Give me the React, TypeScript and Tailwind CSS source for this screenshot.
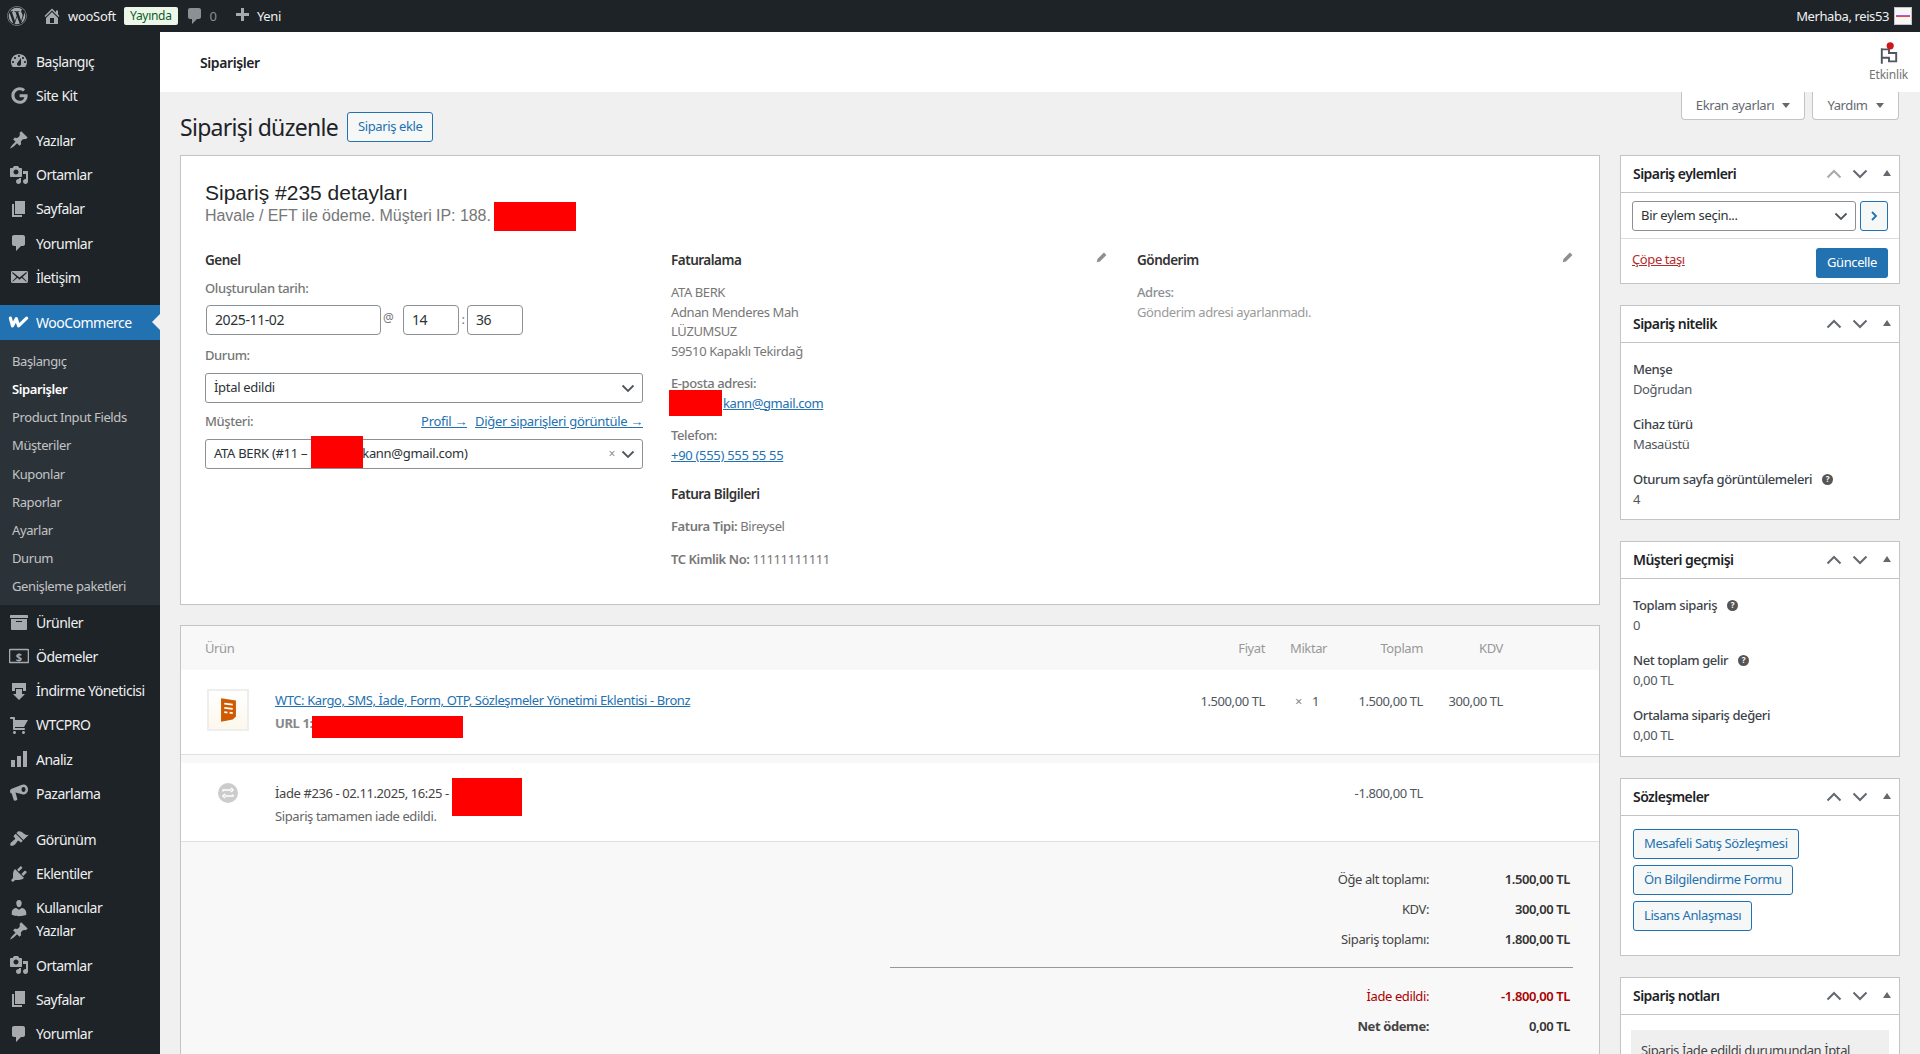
import type { ReactNode } from "react";
import { FaWordpress, FaGoogle } from "react-icons/fa";

const PATHS: Record<string, string> = {
  dashboard: "M3.76 16h12.48c1.1-1.37 1.76-3.11 1.76-5 0-4.42-3.58-8-8-8s-8 3.58-8 8c0 1.89.66 3.63 1.76 5zM10 4c.55 0 1 .45 1 1s-.45 1-1 1-1-.45-1-1 .45-1 1-1zM6 6c.55 0 1 .45 1 1s-.45 1-1 1-1-.45-1-1 .45-1 1-1zm8 0c.55 0 1 .45 1 1s-.45 1-1 1-1-.45-1-1 .45-1 1-1zm-5.37 5.55L12 7v6c0 1.1-.9 2-2 2s-2-.9-2-2c0-.57.24-1.08.63-1.45zM4 10c.55 0 1 .45 1 1s-.45 1-1 1-1-.45-1-1 .45-1 1-1zm12 0c.55 0 1 .45 1 1s-.45 1-1 1-1-.45-1-1 .45-1 1-1z",
  post: "M10.44 3.02l1.82-1.82 6.36 6.35-1.83 1.82c-1.05-.68-2.48-.57-3.41.36l-.75.75c-.92.93-1.04 2.35-.35 3.41l-1.83 1.82-2.41-2.41-2.8 2.79c-.42.42-3.38 2.71-3.8 2.29s1.86-3.39 2.28-3.81l2.79-2.79L4.1 9.36l1.83-1.82c1.05.69 2.48.57 3.4-.36l.75-.75c.93-.92 1.05-2.35.36-3.41z",
  media: "M13 11V4c0-.55-.45-1-1-1h-1.67L9 1H5L3.67 3H2c-.55 0-1 .45-1 1v7c0 .55.45 1 1 1h10c.55 0 1-.45 1-1zM7 4.5c1.38 0 2.5 1.12 2.5 2.5S8.38 9.5 7 9.5 4.5 8.38 4.5 7 5.62 4.5 7 4.5zM14 6h5v10.5c0 1.38-1.12 2.5-2.5 2.5S14 17.88 14 16.5s1.12-2.5 2.5-2.5c.17 0 .34.02.5.05V9h-3V6zm-4 8.05V13h2v3.5c0 1.38-1.12 2.5-2.5 2.5S7 17.88 7 16.5 8.12 14 9.5 14c.17 0 .34.02.5.05z",
  page: "M6 15V2h10v13H6zm-1 1h8v2H3V5h2v11z",
  comment: "M5 2h9c1.1 0 2 .9 2 2v7c0 1.1-.9 2-2 2h-2l-5 5v-5H5c-1.1 0-2-.9-2-2V4c0-1.1.9-2 2-2z",
  email: "M19 14.5v-9c0-.83-.67-1.5-1.5-1.5H3.49c-.83 0-1.5.67-1.5 1.5v9c0 .83.67 1.5 1.5 1.5H17.5c.83 0 1.5-.67 1.5-1.5zm-1.31-9.11c.33.33.15.67-.03.84L13.6 9.95l3.9 4.06c.12.14.2.36.06.51-.13.16-.43.15-.56.05l-4.37-3.73-2.14 1.95-2.13-1.95-4.37 3.73c-.13.1-.43.11-.56-.05-.14-.15-.06-.37.06-.51l3.9-4.06-4.06-3.72c-.18-.17-.36-.51-.03-.84s.67-.17.95.07l6.24 5.04 6.25-5.04c.28-.24.62-.4.95-.07z",
  archive: "M19 4v2H1V4c0-.55.45-1 1-1h16c.55 0 1 .45 1 1zM2 7h16v10c0 .55-.45 1-1 1H3c-.55 0-1-.45-1-1V7zm11 3V9H7v1h6z",
  download: "M3 2h14v8h-3V7H6v3H3V2zm4 6h6v5h3l-6 6-6-6h3V8z",
  cart: "M6 13h9c.55 0 1 .45 1 1s-.45 1-1 1H5c-.55 0-1-.45-1-1V4H2c-.55 0-1-.45-1-1s.45-1 1-1h3c.55 0 1 .45 1 1v2h13l-4 7H6v1zm-.5 3c.83 0 1.5.67 1.5 1.5S6.33 19 5.5 19 4 18.33 4 17.5 4.67 16 5.5 16zm9 0c.83 0 1.5.67 1.5 1.5s-.67 1.5-1.5 1.5-1.5-.67-1.5-1.5.67-1.5 1.5-1.5z",
  bars: "M2 11h4v7H2zM8 7h4v11H8zM14 2h4v16h-4z",
  megaphone: "M14.5 1.5c2.5 0 4.5 2.2 4.5 5s-2 5-4.5 5c-.5 0-1-.1-1.5-.3L6.5 9.6 8.3 16c.2.6-.2 1.1-.7 1.3l-1.6.5c-.6.1-1.1-.2-1.3-.7L2.7 10.6C1.5 10.1 1 9.2 1 8.2c0-1 .6-2 1.7-2.4L12.4 2c.6-.3 1.3-.5 2.1-.5zm0 2.5c-1.2 0-2 1.1-2 2.5S13.3 9 14.5 9s2-1.1 2-2.5S15.7 4 14.5 4z",
  brush: "M14.48 11.06L7.41 3.99l1.5-1.5c.5-.56 2.3-.47 3.51.32 1.21.8 1.43 1.28 2.91 2.1 1.18.64 2.45 1.26 4.45.85zm-.71.71L6.7 4.7 4.93 6.47c-.39.39-.39 1.02 0 1.41l1.06 1.06c.39.39.39 1.03 0 1.42-.6.6-1.43 1.11-2.21 1.69-.35.26-.7.53-1.01.84C1.43 13.23.78 15.78 1.53 16.5c.75.72 3.29.08 4.63-1.25.31-.31.58-.66.85-1.01.58-.78 1.09-1.61 1.69-2.21.39-.39 1.02-.39 1.41 0l1.06 1.06c.39.39 1.02.39 1.41 0z",
  plugin: "M13.11 4.36L9.87 7.6 8 5.73l3.24-3.24c.35-.34 1.05-.2 1.56.32.52.51.66 1.21.31 1.55zm-8 1.77l.91-1.12 9.01 9.01-1.19.84c-.71.71-2.63 1.16-3.82 1.16H6.14L4.9 17.26c-.59.59-1.54.59-2.12 0-.59-.58-.59-1.53 0-2.12l1.24-1.24v-3.88c0-1.13.4-3.19 1.09-3.89zm7.26 3.97l3.24-3.24c.34-.35 1.04-.21 1.55.31.52.51.66 1.21.31 1.55l-3.24 3.25z",
  users: "M10 9.25c-2.27 0-2.73-3.44-2.73-3.44C7 4.02 7.82 2 9.97 2c2.16 0 2.98 2.02 2.71 3.81 0 0-.41 3.44-2.68 3.44zm0 2.57L12.72 10c2.39 0 4.52 2.33 4.52 4.53v2.49s-3.65 1.13-7.24 1.13c-3.65 0-7.24-1.13-7.24-1.13v-2.49c0-2.25 1.94-4.48 4.47-4.48z",
  home: "M16 8.5l1.53 1.53-1.06 1.06L10 4.62l-6.47 6.47-1.06-1.06L10 2.5l4 4v-2h2v4zm-6-2.46l6 5.99V18H4v-5.97zM12 17v-5H8v5h4z",
  plus: "M17 7v3h-5v5H9v-5H4V7h5V2h3v5h5z",
};

const Dash = ({ name, className = "w-5 h-5" }: { name: string; className?: string }) => (
  <svg viewBox="0 0 20 20" className={className} fill="currentColor">
    <path d={PATHS[name]} />
  </svg>
);

const MoneyIcon = () => (
  <svg viewBox="0 0 20 20" className="w-5 h-5">
    <rect x="0.5" y="3.5" width="19" height="13" rx="1" fill="none" stroke="currentColor" strokeWidth="1.6" />
    <text x="10" y="14.5" textAnchor="middle" fontSize="11" fontWeight="700" fill="currentColor">$</text>
  </svg>
);

const WooIcon = () => (
  <svg viewBox="0 0 22 14" className="w-[21px] h-[14px]" fill="none" stroke="#fff" strokeWidth="3.4" strokeLinecap="round" strokeLinejoin="round">
    <path d="M2.5 3l2.2 8 4-7.5 2.4 7.5L19.5 3" />
  </svg>
);

type MenuItem = { label: string; icon: ReactNode; gap?: string; tight?: boolean };

const menuTop: MenuItem[] = [
  { label: "Başlangıç", icon: <Dash name="dashboard" /> },
  { label: "Site Kit", icon: <FaGoogle className="w-[17px] h-[17px] ml-px" /> },
  { label: "Yazılar", icon: <Dash name="post" />, gap: "h-[11px]" },
  { label: "Ortamlar", icon: <Dash name="media" /> },
  { label: "Sayfalar", icon: <Dash name="page" /> },
  { label: "Yorumlar", icon: <Dash name="comment" /> },
  { label: "İletişim", icon: <Dash name="email" /> },
];

const menuBottom: MenuItem[] = [
  { label: "Ürünler", icon: <Dash name="archive" /> },
  { label: "Ödemeler", icon: <MoneyIcon /> },
  { label: "İndirme Yöneticisi", icon: <Dash name="download" /> },
  { label: "WTCPRO", icon: <Dash name="cart" /> },
  { label: "Analiz", icon: <Dash name="bars" /> },
  { label: "Pazarlama", icon: <Dash name="megaphone" /> },
  { label: "Görünüm", icon: <Dash name="brush" />, gap: "h-[12px]" },
  { label: "Eklentiler", icon: <Dash name="plugin" /> },
  { label: "Kullanıcılar", icon: <Dash name="users" />, tight: true },
  { label: "Yazılar", icon: <Dash name="post" /> },
  { label: "Ortamlar", icon: <Dash name="media" /> },
  { label: "Sayfalar", icon: <Dash name="page" /> },
  { label: "Yorumlar", icon: <Dash name="comment" /> },
];

const subMenu = ["Başlangıç", "Siparişler", "Product Input Fields", "Müşteriler", "Kuponlar", "Raporlar", "Ayarlar", "Durum", "Genişleme paketleri"];

const MenuRow = ({ item }: { item: MenuItem }) => (
  <>
    {item.gap && <div className={item.gap} />}
    <div className={`flex h-[34.2px] shrink-0 items-center text-[14px] text-[#f0f0f1] ${item.tight ? "-mb-[11px]" : ""}`}>
      <span className="flex w-9 justify-center pl-px text-[#a7aaad]">{item.icon}</span>
      <span className="tracking-[-0.5px]">{item.label}</span>
    </div>
  </>
);

const Sidebar = () => (
  <aside className="flex w-40 shrink-0 flex-col bg-[#1d2327] pt-3">
    {menuTop.map((m, i) => <MenuRow key={i} item={m} />)}
    <div className="h-[11px]" />
    <div className="relative flex h-[34.2px] shrink-0 items-center bg-[#2271b1] text-[14px] text-white">
      <span className="flex w-9 justify-center pl-px"><WooIcon /></span>
      <span className="tracking-[-0.5px]">WooCommerce</span>
      <span className="absolute right-0 top-[9px] border-y-[8px] border-r-[8px] border-y-transparent border-r-[#f0f0f1]" />
    </div>
    <div className="bg-[#2c3338] pb-1 pt-2">
      {subMenu.map((s) => (
        <div key={s} className={`flex h-[28.2px] items-center pl-3 text-[13px] tracking-[-0.4px] ${s === "Siparişler" ? "font-semibold text-white" : "text-[#c3c4c7]"}`}>
          {s}
        </div>
      ))}
    </div>
    {menuBottom.map((m, i) => <MenuRow key={i} item={m} />)}
  </aside>
);

const AdminBar = () => (
  <header className="flex h-8 shrink-0 items-center justify-between bg-[#1d2327] text-[13px] text-[#f0f0f1]">
    <div className="flex items-center">
      <FaWordpress className="ml-[7px] h-5 w-5 text-[#a7aaad]" />
      <span className="ml-[15px] text-[#a7aaad]"><Dash name="home" className="h-5 w-5" /></span>
      <span className="ml-[6px] pt-px tracking-[-0.3px]">wooSoft</span>
      <span className="ml-2 flex h-[18px] items-center rounded-[2px] bg-[#edf7e9] px-[6px] text-[12px] tracking-[-0.3px] text-[#0a5c2b]">Yayında</span>
      <span className="ml-[7px] text-[#8c8f94]"><Dash name="comment" className="h-[20px] w-[20px]" /></span>
      <span className="ml-[5px] pt-px text-[#8c8f94]">0</span>
      <span className="ml-[15px] text-[#a7aaad]"><Dash name="plus" className="h-[20px] w-[20px]" /></span>
      <span className="ml-[5px] pt-px tracking-[-0.4px]">Yeni</span>
    </div>
    <div className="flex items-center pr-2">
      <span className="pt-px tracking-[-0.4px]">Merhaba, reis53</span>
      <span className="ml-[5px] flex h-[18px] w-[18px] flex-col justify-center border border-[#c3c4c7] bg-[#f6f6f6] px-px">
        <span className="h-px bg-[#a855f7]" />
        <span className="h-px bg-[#ef4444]" />
      </span>
    </div>
  </header>
);

const Chevron = ({ d = "down", className = "text-[#50575e]" }: { d?: "up" | "down"; className?: string }) => (
  <svg viewBox="0 0 16 16" className={`h-4 w-4 ${className}`} fill="none" stroke="currentColor" strokeWidth="2">
    <path d={d === "down" ? "M1.5 4.5L8 11l6.5-6.5" : "M1.5 11.5L8 5l6.5 6.5"} />
  </svg>
);

const SelectChevron = () => (
  <svg viewBox="0 0 16 16" className="h-4 w-4 text-[#50575e]" fill="none" stroke="currentColor" strokeWidth="1.8">
    <path d="M2.5 5.5L8 11l5.5-5.5" />
  </svg>
);

const SelectBox = ({ children, className = "", extra }: { children: ReactNode; className?: string; extra?: ReactNode }) => (
  <div className={`flex h-[30px] items-center rounded-[3px] border border-[#8c8f94] bg-white pl-2 pr-[6px] text-[13px] text-[#2c3338] ${className}`}>
    <span className="flex-1 tracking-[-0.3px]">{children}</span>
    {extra}
    <SelectChevron />
  </div>
);

const Field = ({ className = "", children }: { className?: string; children: ReactNode }) => (
  <div className={`flex h-[30px] items-center rounded-[4px] border border-[#8c8f94] bg-white pl-2 text-[14px] text-[#2c3338] ${className}`}>{children}</div>
);

const Redact = ({ className }: { className: string }) => <span className={`absolute bg-[#ff0000] ${className}`} />;

const Pencil = () => (
  <svg viewBox="0 0 12 12" className="h-[11px] w-[11px] text-[#8c8f94]" fill="currentColor">
    <path d="M8.6.6l2.8 2.8-7 7L.8 11.2l.8-3.6z" />
  </svg>
);

const SectionTitle = ({ children, className = "" }: { children: ReactNode; className?: string }) => (
  <h3 className={`text-[13.5px] font-semibold leading-5 tracking-[-0.5px] text-[#333] ${className}`}>{children}</h3>
);

const OrderDetails = () => (
  <section className="relative h-[450px] border border-[#c3c4c7] bg-white px-6 pt-6 text-[13px] leading-[19.5px] text-[#777] tracking-[-0.4px]">
    <h2 className="font-['Liberation_Sans',Arial,sans-serif] text-[21px] leading-[26px] tracking-normal text-[#1d2327]">Sipariş #235 detayları</h2>
    <p className="font-['Liberation_Sans',Arial,sans-serif] text-[16px] leading-[20px] tracking-[-0.05px]">Havale / EFT ile ödeme. Müşteri IP: 188.</p>
    <Redact className="left-[313px] top-[46px] h-[29px] w-[82px]" />
    <div className="mt-[24px] grid grid-cols-3 gap-[28px]">
      <div className="relative">
        <SectionTitle>Genel</SectionTitle>
        <div className="mt-2 font-medium leading-5">Oluşturulan tarih:</div>
        <div className="mt-[7px] flex items-center">
          <Field className="ml-px w-[175px]">2025-11-02</Field>
          <span className="ml-[2px] w-5 -translate-y-[2px] text-[12px]">@</span>
          <Field className="w-[56px]">14</Field>
          <span className="w-2 text-center">:</span>
          <Field className="w-[56px]">36</Field>
        </div>
        <div className="mt-[10px] font-medium leading-5">Durum:</div>
        <SelectBox className="mt-2">İptal edildi</SelectBox>
        <div className="mt-[8px] flex justify-between leading-5">
          <span className="font-medium">Müşteri:</span>
          <span className="flex gap-2 tracking-[-0.3px] text-[#2271b1] underline">
            <span>Profil →</span>
            <span>Diğer siparişleri görüntüle →</span>
          </span>
        </div>
        <div className="relative mt-2">
          <SelectBox extra={<span className="mr-[5px] text-[12px] text-[#8c8f94]">×</span>}>ATA BERK (#11 – <span className="ml-[52px]" />kann@gmail.com)</SelectBox>
          <Redact className="left-[106px] -top-[3px] h-[32px] w-[52px]" />
        </div>
      </div>

      <div className="relative">
        <div className="flex items-center justify-between pr-[2px]">
          <SectionTitle>Faturalama</SectionTitle>
          <span className="-translate-y-[3px]"><Pencil /></span>
        </div>
        <p className="mt-[13px]">ATA BERK<br />Adnan Menderes Mah<br />LÜZUMSUZ<br />59510 Kapaklı Tekirdağ</p>
        <div className="relative mt-[13px]">
          <div className="font-medium">E-posta adresi:</div>
          <span className="ml-[52px] text-[#2271b1] underline">kann@gmail.com</span>
          <Redact className="-left-[2px] top-[16px] h-[26px] w-[53px]" />
        </div>
        <div className="mt-[13px] font-medium">Telefon:</div>
        <span className="tracking-[-0.3px] text-[#2271b1] underline">+90 (555) 555 55 55</span>
        <SectionTitle className="mt-[19px]">Fatura Bilgileri</SectionTitle>
        <p className="mt-[13px]"><span className="font-semibold">Fatura Tipi:</span> Bireysel</p>
        <p className="mt-[13px]"><span className="font-semibold">TC Kimlik No:</span> 11111111111</p>
      </div>

      <div>
        <div className="flex items-center justify-between pr-[2px]">
          <SectionTitle>Gönderim</SectionTitle>
          <span className="-translate-y-[3px]"><Pencil /></span>
        </div>
        <p className="mt-[13px] font-medium text-[#8c8f94]">Adres:</p>
        <p className="text-[#9a9a9a]">Gönderim adresi ayarlanmadı.</p>
      </div>
    </div>
  </section>
);

const TABLE_COLS = "grid grid-cols-[975px_85px_75px_83px_80px] pl-6";

const ProductThumb = () => (
  <span className="ml-[2px] flex h-[42px] w-[42px] shrink-0 items-center justify-center border-2 border-[#eeeeee] bg-gradient-to-b from-white to-[#fdf8ec]">
    <svg viewBox="0 0 16 24" className="h-[26px] w-[17px]">
      <path d="M1 1l14 2v15l-3 3-11 2z" fill="#cf5a00" />
      <path d="M4 6l8 1M4 10l8 1M4 14l3 .4M9 14.5l3 .4" stroke="#fff" strokeWidth="1.6" />
    </svg>
  </span>
);

const RefundIcon = () => (
  <svg viewBox="0 0 20 20" className="h-5 w-5">
    <circle cx="10" cy="10" r="10" fill="#cccccc" />
    <path d="M5 8.5V7h8M13 5l2 2-2 2M15 11.5V13H7M7 15l-2-2 2-2" fill="none" stroke="#fff" strokeWidth="1.5" />
  </svg>
);

const TotalRow = ({ label, value, className = "", labelClass = "", valueClass = "font-semibold text-[#333]" }: { label: string; value: string; className?: string; labelClass?: string; valueClass?: string }) => (
  <div className={`flex h-[30px] items-center justify-end pr-[29px] ${className}`}>
    <span className={labelClass}>{label}</span>
    <span className={`w-[141px] text-right ${valueClass}`}>{value}</span>
  </div>
);

const OrderItems = () => (
  <section className="mt-5 border border-[#c3c4c7] bg-[#f8f8f8] pb-10 text-[13px] leading-[19.5px] tracking-[-0.4px] text-[#50575e]">
    <div className={`${TABLE_COLS} h-[44px] items-center pt-[2px] text-[#999]`}>
      <span>Ürün</span>
      <span className="text-right">Fiyat</span>
      <span className="pl-[25px]">Miktar</span>
      <span className="text-right">Toplam</span>
      <span className="text-right">KDV</span>
    </div>
    <div className={`${TABLE_COLS} h-[85px] border-b border-[#dfdfdf] bg-white pt-[19px]`}>
      <div className="flex gap-[26px]">
        <ProductThumb />
        <div className="relative pt-[2px]">
          <div className="text-[#2271b1] underline">WTC: Kargo, SMS, İade, Form, OTP, Sözleşmeler Yönetimi Eklentisi - Bronz</div>
          <div className="mt-[3px] font-bold text-[#888]">URL 1:</div>
          <Redact className="left-[37px] top-[27px] h-[22px] w-[151px]" />
        </div>
      </div>
      <span className="pt-[3px] text-right">1.500,00 TL</span>
      <span className="flex gap-[10px] pl-[30px] pt-[3px]"><span className="text-[#888]">×</span><span>1</span></span>
      <span className="pt-[3px] text-right">1.500,00 TL</span>
      <span className="pt-[3px] text-right">300,00 TL</span>
    </div>
    <div className="h-2" />
    <div className={`${TABLE_COLS} h-[79px] border-b border-[#dfdfdf] bg-white pt-[21px]`}>
      <div className="flex">
        <span className="ml-[13px] mr-[37px] -mt-[1px]"><RefundIcon /></span>
        <div className="relative">
          <div className="text-[#444]">İade #236 - 02.11.2025, 16:25 -</div>
          <div className="mt-[3px] text-[#666]">Sipariş tamamen iade edildi.</div>
          <Redact className="left-[177px] -top-[6px] h-[38px] w-[70px]" />
        </div>
      </div>
      <span />
      <span />
      <span className="text-right">-1.800,00 TL</span>
      <span />
    </div>
    <div className="pt-[23px] text-[#444]">
      <TotalRow label="Öğe alt toplamı:" value="1.500,00 TL" />
      <TotalRow label="KDV:" value="300,00 TL" />
      <TotalRow label="Sipariş toplamı:" value="1.800,00 TL" />
      <div className="ml-auto mr-[26px] mt-3 h-px w-[683px] bg-[#999]" />
      <TotalRow className="mt-[14px]" label="İade edildi:" labelClass="text-[#a00]" value="-1.800,00 TL" valueClass="font-semibold text-[#a00]" />
      <TotalRow label="Net ödeme:" labelClass="font-bold" value="0,00 TL" />
    </div>
  </section>
);

const Postbox = ({ title, height, faded, children }: { title: string; height: string; faded?: boolean; children: ReactNode }) => (
  <section className={`shrink-0 border border-[#c3c4c7] bg-white text-[13px] leading-[19.5px] tracking-[-0.4px] text-[#50575e] ${height}`}>
    <div className="flex h-[37px] items-center border-b border-[#c3c4c7] pl-3 pr-2">
      <h3 className="flex-1 text-[14px] font-semibold tracking-[-0.55px] text-[#1d2327]">{title}</h3>
      <Chevron d="up" className={faded ? "text-[#a7aaad]" : "text-[#646970]"} />
      <span className="ml-[10px]"><Chevron className="text-[#646970]" /></span>
      <span className="ml-[15px] h-0 w-0 -translate-y-[1px] border-x-[4px] border-b-[6px] border-x-transparent border-b-[#646970]" />
    </div>
    {children}
  </section>
);

const Help = () => (
  <span className="ml-[10px] inline-flex h-[11px] w-[11px] items-center justify-center rounded-full bg-[#555] text-[8px] font-bold leading-none tracking-normal text-white">?</span>
);

const Stat = ({ label, value, help }: { label: ReactNode; value: string; help?: boolean }) => (
  <div className="mb-[15px] leading-5">
    <div className="flex items-center font-medium text-[#3c434a]">{label}{help && <Help />}</div>
    <div>{value}</div>
  </div>
);

const DocButton = ({ children }: { children: ReactNode }) => (
  <span className="flex h-[30px] w-fit items-center rounded-[3px] border border-[#2271b1] bg-[#f6f7f7] px-[10px] text-[#2271b1]">{children}</span>
);

const SideColumn = () => (
  <aside className="flex w-[280px] shrink-0 flex-col gap-[21px]">
    <Postbox title="Sipariş eylemleri" height="h-[129px]" faded>
      <div className="flex h-[46px] items-center gap-1 border-b border-[#dcdcde] px-[11px]">
        <SelectBox className="w-[224px]">Bir eylem seçin...</SelectBox>
        <span className="flex h-[30px] w-[28px] items-center justify-center rounded-[3px] border border-[#2271b1] bg-[#f6f7f7] text-[#2271b1]">
          <svg viewBox="0 0 10 12" className="h-3 w-[10px]" fill="none" stroke="currentColor" strokeWidth="1.8"><path d="M3 2l4 4-4 4" /></svg>
        </span>
      </div>
      <div className="flex h-[44px] items-center justify-between px-[11px] pt-[3px]">
        <span className="-translate-y-[3px] text-[#b32d2e] underline">Çöpe taşı</span>
        <span className="flex h-[30px] w-[72px] items-center justify-center rounded-[3px] bg-[#2271b1] text-white">Güncelle</span>
      </div>
    </Postbox>
    <Postbox title="Sipariş nitelik" height="h-[215px]">
      <div className="px-3 pt-[16px]">
        <Stat label="Menşe" value="Doğrudan" />
        <Stat label="Cihaz türü" value="Masaüstü" />
        <Stat label="Oturum sayfa görüntülemeleri" value="4" help />
      </div>
    </Postbox>
    <Postbox title="Müşteri geçmişi" height="h-[216px]">
      <div className="px-3 pt-[16px]">
        <Stat label="Toplam sipariş" value="0" help />
        <Stat label="Net toplam gelir" value="0,00 TL" help />
        <Stat label="Ortalama sipariş değeri" value="0,00 TL" />
      </div>
    </Postbox>
    <Postbox title="Sözleşmeler" height="h-[178px]">
      <div className="flex flex-col gap-[6px] px-3 pt-[13px]">
        <DocButton>Mesafeli Satış Sözleşmesi</DocButton>
        <DocButton>Ön Bilgilendirme Formu</DocButton>
        <DocButton>Lisans Anlaşması</DocButton>
      </div>
    </Postbox>
    <Postbox title="Sipariş notları" height="h-[300px]">
      <div className="mx-[10px] mt-[15px] bg-[#efefef] px-[10px] pb-[40px] pt-[14px] leading-[12px] text-[#444]">Sipariş İade edildi durumundan İptal</div>
    </Postbox>
  </aside>
);

const TopHeader = () => (
  <div className="flex h-[60px] shrink-0 items-center justify-between bg-white pl-10 pr-[12px]">
    <span className="text-[14px] font-semibold tracking-[-0.4px] text-[#1d2327]">Siparişler</span>
    <div className="flex flex-col items-center gap-[2px] text-[12px] leading-4 tracking-[-0.2px] text-[#757575]">
      <svg viewBox="0 0 20 20" className="h-6 w-6" fill="none">
        <path d="M4 19V6M4 7h6v3h6v7h-6v-3H4" stroke="#50575e" strokeWidth="1.6" />
        <circle cx="11" cy="4" r="3" fill="#cc1818" />
      </svg>
      <span>Etkinlik</span>
    </div>
  </div>
);

export default function App() {
  return (
    <div className="flex h-screen flex-col overflow-hidden bg-[#f0f0f1] font-['Noto_Sans','Open_Sans',sans-serif]">
      <AdminBar />
      <div className="flex min-h-0 flex-1">
        <Sidebar />
        <main className="min-w-0 flex-1 overflow-hidden">
          <TopHeader />
          <div className="flex justify-end gap-[7px] pr-[21px] text-[13px] tracking-[-0.4px] text-[#646970]">
            <span className="flex h-[28px] w-[124px] items-center justify-center gap-2 rounded-b-[4px] border border-t-0 border-[#c3c4c7] bg-white">Ekran ayarları <span className="h-0 w-0 border-x-[4px] border-t-[5px] border-x-transparent border-t-[#646970]" /></span>
            <span className="flex h-[28px] w-[87px] items-center justify-center gap-2 rounded-b-[4px] border border-t-0 border-[#c3c4c7] bg-white">Yardım <span className="h-0 w-0 border-x-[4px] border-t-[5px] border-x-transparent border-t-[#646970]" /></span>
          </div>
          <div className="-mt-2 flex items-center gap-[9px] px-5">
            <h1 className="text-[23px] leading-[30px] tracking-[-0.7px] text-[#1d2327]">Siparişi düzenle</h1>
            <span className="flex h-[30px] items-center rounded-[3px] border border-[#2271b1] bg-[#f6f7f7] px-[10px] text-[13px] tracking-[-0.4px] text-[#2271b1]">Sipariş ekle</span>
          </div>
          <div className="mt-[13px] flex items-start gap-5 pl-5">
            <div className="w-[1420px] shrink-0">
              <OrderDetails />
              <OrderItems />
            </div>
            <SideColumn />
          </div>
        </main>
      </div>
    </div>
  );
}
